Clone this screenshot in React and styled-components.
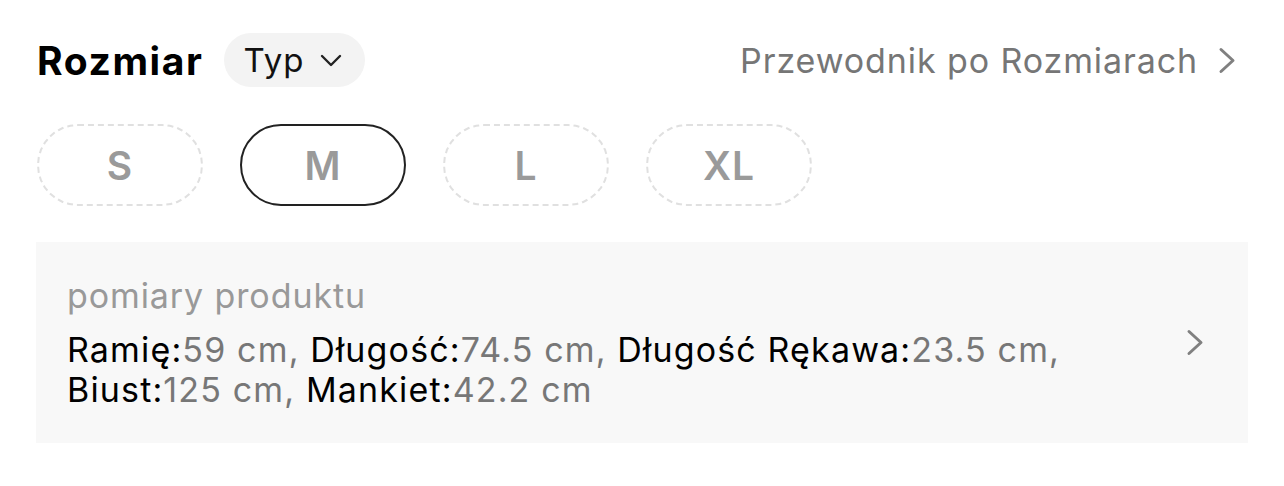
import React from "react";
import styled, { createGlobalStyle } from "styled-components";

const Global = createGlobalStyle`
  html, body { margin: 0; padding: 0; background: #fff; }
  body { font-family: Inter, Roboto, "Liberation Sans", sans-serif; color: #000; }
`;

const Page = styled.div`
  width: 1284px;
  height: 486px;
  box-sizing: border-box;
  padding: 33px 36px 0 37px;
  display: flex;
  flex-direction: column;
`;

const Header = styled.div`
  display: flex;
  align-items: center;
  height: 54px;
`;

const Title = styled.div`
  font-size: 39px;
  font-weight: 700;
  letter-spacing: 1.6px;
  margin-right: 20px;
`;

const TypePill = styled.div`
  display: flex;
  align-items: center;
  gap: 15px;
  height: 54px;
  padding: 0 23px 0 20px;
  border-radius: 27px;
  background: #f3f3f3;
  font-size: 33px;
  letter-spacing: 1px;
  color: #111;
  box-sizing: border-box;
`;

const GuideLink = styled.div`
  margin-left: auto;
  display: flex;
  align-items: center;
  gap: 20px;
  font-size: 34px;
  letter-spacing: 0.9px;
  color: #767676;
  padding-right: 12px;
`;

const SizeRow = styled.div`
  display: flex;
  gap: 37px;
  margin-top: 37px;
`;

const SizeButton = styled.div`
  width: 166px;
  height: 82px;
  box-sizing: border-box;
  border-radius: 41px;
  display: flex;
  align-items: center;
  justify-content: center;
  font-size: 39px;
  font-weight: 600;
  letter-spacing: 1px;
  color: #9a9a9a;
  border: ${(p) => (p.$active ? "2.5px solid #222" : "2px dashed #e0e0e0")};
`;

const MeasureBox = styled.div`
  margin-top: 36px;
  margin-left: -1px;
  width: 1212px;
  height: 201px;
  box-sizing: border-box;
  background: #f8f8f8;
  display: flex;
  align-items: center;
  padding: 0 44px 0 31px;
`;

const MeasureText = styled.div`
  flex: 1;
  padding-right: 90px;
`;

const Caption = styled.div`
  font-size: 34px;
  letter-spacing: 0.9px;
  color: #999;
  line-height: 40px;
  margin-bottom: 14px;
`;

const Values = styled.div`
  font-size: 34px;
  letter-spacing: 1.15px;
  line-height: 40px;
`;

const Key = styled.span`
  color: #000;
`;

const Val = styled.span`
  color: #777;
`;

const Chevron = ({ color = "#808080", width = 3 }) => (
  <svg width="18" height="27" viewBox="0 0 18 27" fill="none">
    <path d="M3 2.5 L15 13.5 L3 24.5" stroke={color} strokeWidth={width} strokeLinecap="round" strokeLinejoin="round" />
  </svg>
);

const Caret = () => (
  <svg width="22" height="13" viewBox="0 0 22 13" fill="none">
    <path d="M2 2 L11 11 L20 2" stroke="#222" strokeWidth="2.4" strokeLinecap="round" strokeLinejoin="round" />
  </svg>
);

const items = [
  ["Ramię:", "59 cm"],
  ["Długość:", "74.5 cm"],
  ["Długość Rękawa:", "23.5 cm"],
  ["Biust:", "125 cm"],
  ["Mankiet:", "42.2 cm"],
];

export default function App() {
  return (
    <>
      <Global />
      <Page>
        <Header>
          <Title>Rozmiar</Title>
          <TypePill>
            Typ
            <Caret />
          </TypePill>
          <GuideLink>
            Przewodnik po Rozmiarach
            <Chevron />
          </GuideLink>
        </Header>
        <SizeRow>
          {["S", "M", "L", "XL"].map((s) => (
            <SizeButton key={s} $active={s === "M"}>
              {s}
            </SizeButton>
          ))}
        </SizeRow>
        <MeasureBox>
          <MeasureText>
            <Caption>pomiary produktu</Caption>
            <Values>
              {items.map(([k, v], i) => (
                <React.Fragment key={k}>
                  <Key>{k}</Key>
                  <Val>
                    {v}
                    {i < items.length - 1 ? ", " : ""}
                  </Val>
                </React.Fragment>
              ))}
            </Values>
          </MeasureText>
          <Chevron />
        </MeasureBox>
      </Page>
    </>
  );
}
